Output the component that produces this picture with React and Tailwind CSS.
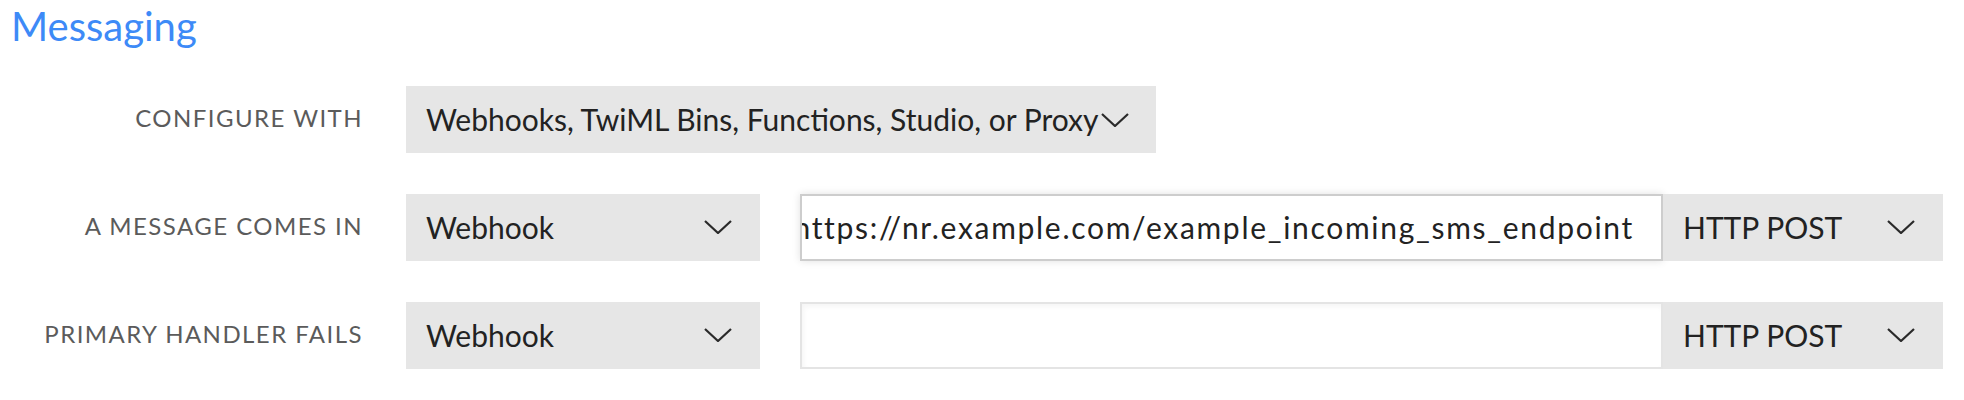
import React from 'react';

const font = { fontFamily: 'Lato, "Open Sans", sans-serif' };

const Chevron = ({ className = '' }) => (
  <svg width="28" height="14" viewBox="0 0 28 14" className={className} fill="none">
    <polyline points="1,1 14,13 27,1" stroke="#2a2a2a" strokeWidth="2.2" />
  </svg>
);

const Select = ({ value, width }) => (
  <div className={`relative flex h-[67px] items-center bg-[#e6e6e6] pl-[20px] ${width}`}>
    <span className="whitespace-nowrap text-[30px] text-[#222]">{value}</span>
    <Chevron className="absolute right-[28px] top-[26px]" />
  </div>
);

const Label = ({ children }) => (
  <div className="w-[406px] shrink-0 pb-[4px] pr-[43px] text-right text-[24px] uppercase tracking-[1.45px] text-[#5b5b5b]">
    {children}
  </div>
);

export default function App() {
  return (
    <div className="min-h-screen bg-white pt-[2px]" style={font}>
      <h2 className="pl-[11px] text-[40px] leading-[48px] text-[#3d8af7]">Messaging</h2>

      <div className="mt-[36px] flex flex-col gap-[41px]">
        {/* Configure with */}
        <div className="flex items-center">
          <Label>Configure with</Label>
          <div className="relative flex h-[67px] w-[750px] items-center bg-[#e6e6e6] pl-[20px]">
            <span className="whitespace-nowrap text-[30px] text-[#222]">
              Webhooks, TwiML Bins, Functions, Studio, or Proxy
            </span>
            <Chevron className="absolute left-[695px] top-[27px]" />
          </div>
        </div>

        {/* A message comes in */}
        <div className="flex items-center">
          <Label>A message comes in</Label>
          <Select value="Webhook" width="w-[354px]" />
          <div className="ml-[40px] flex h-[67px] w-[863px] items-center justify-end overflow-hidden border-2 border-[#cdcdcd] bg-white pr-[27px] shadow-[0_0_8px_rgba(0,0,0,0.12)]">
            <span className="whitespace-nowrap text-[30px] tracking-[1.7px] text-[#222]">
              https://nr.example.com/example_incoming_sms_endpoint
            </span>
          </div>
          <Select value="HTTP POST" width="w-[280px]" />
        </div>

        {/* Primary handler fails */}
        <div className="flex items-center">
          <Label>Primary handler fails</Label>
          <Select value="Webhook" width="w-[354px]" />
          <div className="ml-[40px] h-[67px] w-[863px] border-2 border-[#e4e4e4] bg-white shadow-[inset_2px_3px_5px_rgba(0,0,0,0.04)]" />
          <Select value="HTTP POST" width="w-[280px]" />
        </div>
      </div>
    </div>
  );
}
